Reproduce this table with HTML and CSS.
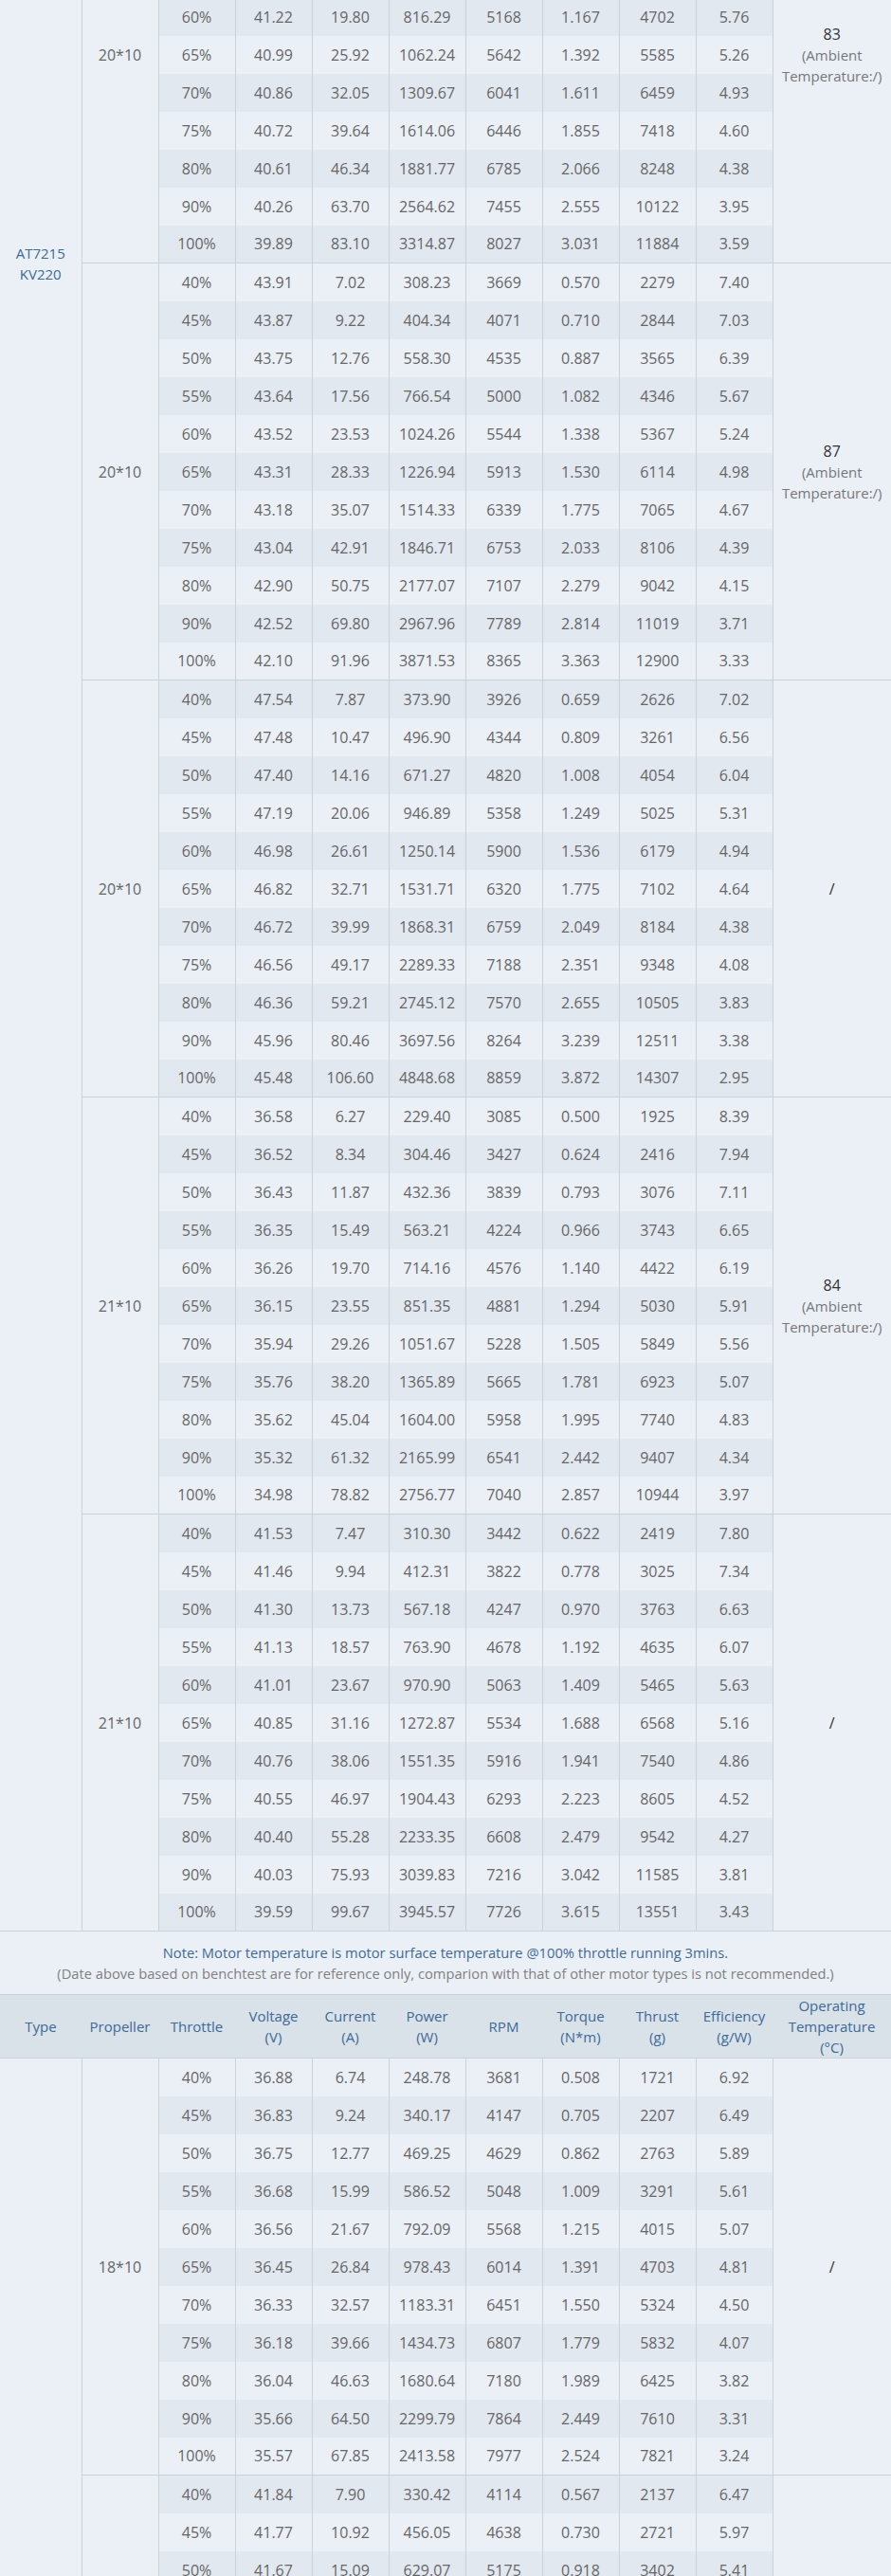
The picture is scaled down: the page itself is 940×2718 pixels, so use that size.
FILE: index.html
```html
<!DOCTYPE html>
<html lang="en">
<head>
<meta charset="utf-8">
<title>AT7215 KV220 test data</title>
<link rel="stylesheet" href="styles.css">
</head>
<body>
<div class="page">
<table class="spec">
<colgroup>
<col class="c-type"><col class="c-num"><col class="c-num"><col class="c-num"><col class="c-num"><col class="c-num"><col class="c-num"><col class="c-num"><col class="c-num"><col class="c-num"><col class="c-temp">
</colgroup>
<tbody class="t1">
<tr class="g"><td class="span type" rowspan="55"><span class="model">AT7215<br>KV220</span></td><td class="span prop" rowspan="11">20*10</td><td></td><td></td><td></td><td></td><td></td><td></td><td></td><td></td><td class="span temp" rowspan="11"><span class="tv">83</span><br><span class="amb">(Ambient<br>Temperature:/)</span></td></tr>
<tr><td></td><td></td><td></td><td></td><td></td><td></td><td></td><td></td></tr>
<tr><td></td><td></td><td></td><td></td><td></td><td></td><td></td><td></td></tr>
<tr><td></td><td></td><td></td><td></td><td></td><td></td><td></td><td></td></tr>
<tr><td>60%</td><td>41.22</td><td>19.80</td><td>816.29</td><td>5168</td><td>1.167</td><td>4702</td><td>5.76</td></tr>
<tr><td>65%</td><td>40.99</td><td>25.92</td><td>1062.24</td><td>5642</td><td>1.392</td><td>5585</td><td>5.26</td></tr>
<tr><td>70%</td><td>40.86</td><td>32.05</td><td>1309.67</td><td>6041</td><td>1.611</td><td>6459</td><td>4.93</td></tr>
<tr><td>75%</td><td>40.72</td><td>39.64</td><td>1614.06</td><td>6446</td><td>1.855</td><td>7418</td><td>4.60</td></tr>
<tr><td>80%</td><td>40.61</td><td>46.34</td><td>1881.77</td><td>6785</td><td>2.066</td><td>8248</td><td>4.38</td></tr>
<tr><td>90%</td><td>40.26</td><td>63.70</td><td>2564.62</td><td>7455</td><td>2.555</td><td>10122</td><td>3.95</td></tr>
<tr><td>100%</td><td>39.89</td><td>83.10</td><td>3314.87</td><td>8027</td><td>3.031</td><td>11884</td><td>3.59</td></tr>

<tr class="g"><td class="span prop" rowspan="11">20*10</td><td>40%</td><td>43.91</td><td>7.02</td><td>308.23</td><td>3669</td><td>0.570</td><td>2279</td><td>7.40</td><td class="span temp" rowspan="11"><span class="tv">87</span><br><span class="amb">(Ambient<br>Temperature:/)</span></td></tr>
<tr><td>45%</td><td>43.87</td><td>9.22</td><td>404.34</td><td>4071</td><td>0.710</td><td>2844</td><td>7.03</td></tr>
<tr><td>50%</td><td>43.75</td><td>12.76</td><td>558.30</td><td>4535</td><td>0.887</td><td>3565</td><td>6.39</td></tr>
<tr><td>55%</td><td>43.64</td><td>17.56</td><td>766.54</td><td>5000</td><td>1.082</td><td>4346</td><td>5.67</td></tr>
<tr><td>60%</td><td>43.52</td><td>23.53</td><td>1024.26</td><td>5544</td><td>1.338</td><td>5367</td><td>5.24</td></tr>
<tr><td>65%</td><td>43.31</td><td>28.33</td><td>1226.94</td><td>5913</td><td>1.530</td><td>6114</td><td>4.98</td></tr>
<tr><td>70%</td><td>43.18</td><td>35.07</td><td>1514.33</td><td>6339</td><td>1.775</td><td>7065</td><td>4.67</td></tr>
<tr><td>75%</td><td>43.04</td><td>42.91</td><td>1846.71</td><td>6753</td><td>2.033</td><td>8106</td><td>4.39</td></tr>
<tr><td>80%</td><td>42.90</td><td>50.75</td><td>2177.07</td><td>7107</td><td>2.279</td><td>9042</td><td>4.15</td></tr>
<tr><td>90%</td><td>42.52</td><td>69.80</td><td>2967.96</td><td>7789</td><td>2.814</td><td>11019</td><td>3.71</td></tr>
<tr><td>100%</td><td>42.10</td><td>91.96</td><td>3871.53</td><td>8365</td><td>3.363</td><td>12900</td><td>3.33</td></tr>

<tr class="g"><td class="span prop" rowspan="11">20*10</td><td>40%</td><td>47.54</td><td>7.87</td><td>373.90</td><td>3926</td><td>0.659</td><td>2626</td><td>7.02</td><td class="span temp" rowspan="11"><span class="tv">/</span></td></tr>
<tr><td>45%</td><td>47.48</td><td>10.47</td><td>496.90</td><td>4344</td><td>0.809</td><td>3261</td><td>6.56</td></tr>
<tr><td>50%</td><td>47.40</td><td>14.16</td><td>671.27</td><td>4820</td><td>1.008</td><td>4054</td><td>6.04</td></tr>
<tr><td>55%</td><td>47.19</td><td>20.06</td><td>946.89</td><td>5358</td><td>1.249</td><td>5025</td><td>5.31</td></tr>
<tr><td>60%</td><td>46.98</td><td>26.61</td><td>1250.14</td><td>5900</td><td>1.536</td><td>6179</td><td>4.94</td></tr>
<tr><td>65%</td><td>46.82</td><td>32.71</td><td>1531.71</td><td>6320</td><td>1.775</td><td>7102</td><td>4.64</td></tr>
<tr><td>70%</td><td>46.72</td><td>39.99</td><td>1868.31</td><td>6759</td><td>2.049</td><td>8184</td><td>4.38</td></tr>
<tr><td>75%</td><td>46.56</td><td>49.17</td><td>2289.33</td><td>7188</td><td>2.351</td><td>9348</td><td>4.08</td></tr>
<tr><td>80%</td><td>46.36</td><td>59.21</td><td>2745.12</td><td>7570</td><td>2.655</td><td>10505</td><td>3.83</td></tr>
<tr><td>90%</td><td>45.96</td><td>80.46</td><td>3697.56</td><td>8264</td><td>3.239</td><td>12511</td><td>3.38</td></tr>
<tr><td>100%</td><td>45.48</td><td>106.60</td><td>4848.68</td><td>8859</td><td>3.872</td><td>14307</td><td>2.95</td></tr>

<tr class="g"><td class="span prop" rowspan="11">21*10</td><td>40%</td><td>36.58</td><td>6.27</td><td>229.40</td><td>3085</td><td>0.500</td><td>1925</td><td>8.39</td><td class="span temp" rowspan="11"><span class="tv">84</span><br><span class="amb">(Ambient<br>Temperature:/)</span></td></tr>
<tr><td>45%</td><td>36.52</td><td>8.34</td><td>304.46</td><td>3427</td><td>0.624</td><td>2416</td><td>7.94</td></tr>
<tr><td>50%</td><td>36.43</td><td>11.87</td><td>432.36</td><td>3839</td><td>0.793</td><td>3076</td><td>7.11</td></tr>
<tr><td>55%</td><td>36.35</td><td>15.49</td><td>563.21</td><td>4224</td><td>0.966</td><td>3743</td><td>6.65</td></tr>
<tr><td>60%</td><td>36.26</td><td>19.70</td><td>714.16</td><td>4576</td><td>1.140</td><td>4422</td><td>6.19</td></tr>
<tr><td>65%</td><td>36.15</td><td>23.55</td><td>851.35</td><td>4881</td><td>1.294</td><td>5030</td><td>5.91</td></tr>
<tr><td>70%</td><td>35.94</td><td>29.26</td><td>1051.67</td><td>5228</td><td>1.505</td><td>5849</td><td>5.56</td></tr>
<tr><td>75%</td><td>35.76</td><td>38.20</td><td>1365.89</td><td>5665</td><td>1.781</td><td>6923</td><td>5.07</td></tr>
<tr><td>80%</td><td>35.62</td><td>45.04</td><td>1604.00</td><td>5958</td><td>1.995</td><td>7740</td><td>4.83</td></tr>
<tr><td>90%</td><td>35.32</td><td>61.32</td><td>2165.99</td><td>6541</td><td>2.442</td><td>9407</td><td>4.34</td></tr>
<tr><td>100%</td><td>34.98</td><td>78.82</td><td>2756.77</td><td>7040</td><td>2.857</td><td>10944</td><td>3.97</td></tr>

<tr class="g"><td class="span prop" rowspan="11">21*10</td><td>40%</td><td>41.53</td><td>7.47</td><td>310.30</td><td>3442</td><td>0.622</td><td>2419</td><td>7.80</td><td class="span temp" rowspan="11"><span class="tv">/</span></td></tr>
<tr><td>45%</td><td>41.46</td><td>9.94</td><td>412.31</td><td>3822</td><td>0.778</td><td>3025</td><td>7.34</td></tr>
<tr><td>50%</td><td>41.30</td><td>13.73</td><td>567.18</td><td>4247</td><td>0.970</td><td>3763</td><td>6.63</td></tr>
<tr><td>55%</td><td>41.13</td><td>18.57</td><td>763.90</td><td>4678</td><td>1.192</td><td>4635</td><td>6.07</td></tr>
<tr><td>60%</td><td>41.01</td><td>23.67</td><td>970.90</td><td>5063</td><td>1.409</td><td>5465</td><td>5.63</td></tr>
<tr><td>65%</td><td>40.85</td><td>31.16</td><td>1272.87</td><td>5534</td><td>1.688</td><td>6568</td><td>5.16</td></tr>
<tr><td>70%</td><td>40.76</td><td>38.06</td><td>1551.35</td><td>5916</td><td>1.941</td><td>7540</td><td>4.86</td></tr>
<tr><td>75%</td><td>40.55</td><td>46.97</td><td>1904.43</td><td>6293</td><td>2.223</td><td>8605</td><td>4.52</td></tr>
<tr><td>80%</td><td>40.40</td><td>55.28</td><td>2233.35</td><td>6608</td><td>2.479</td><td>9542</td><td>4.27</td></tr>
<tr><td>90%</td><td>40.03</td><td>75.93</td><td>3039.83</td><td>7216</td><td>3.042</td><td>11585</td><td>3.81</td></tr>
<tr><td>100%</td><td>39.59</td><td>99.67</td><td>3945.57</td><td>7726</td><td>3.615</td><td>13551</td><td>3.43</td></tr>
</tbody>

<tbody class="note">
<tr><td colspan="11"><span class="note-main">Note: Motor temperature is motor surface temperature @100% throttle running 3mins.</span><br><span class="note-sub">(Date above based on benchtest are for reference only, comparion with that of other motor types is not recommended.)</span></td></tr>
</tbody>

<tbody class="head">
<tr><th>Type</th><th>Propeller</th><th>Throttle</th><th>Voltage<br>(V)</th><th>Current<br>(A)</th><th>Power<br>(W)</th><th>RPM</th><th>Torque<br>(N*m)</th><th>Thrust<br>(g)</th><th>Efficiency<br>(g/W)</th><th>Operating<br>Temperature<br>(°C)</th></tr>
</tbody>

<tbody class="t2">
<tr class="g"><td class="span type" rowspan="14"></td><td class="span prop" rowspan="11">18*10</td><td>40%</td><td>36.88</td><td>6.74</td><td>248.78</td><td>3681</td><td>0.508</td><td>1721</td><td>6.92</td><td class="span temp" rowspan="11"><span class="tv">/</span></td></tr>
<tr><td>45%</td><td>36.83</td><td>9.24</td><td>340.17</td><td>4147</td><td>0.705</td><td>2207</td><td>6.49</td></tr>
<tr><td>50%</td><td>36.75</td><td>12.77</td><td>469.25</td><td>4629</td><td>0.862</td><td>2763</td><td>5.89</td></tr>
<tr><td>55%</td><td>36.68</td><td>15.99</td><td>586.52</td><td>5048</td><td>1.009</td><td>3291</td><td>5.61</td></tr>
<tr><td>60%</td><td>36.56</td><td>21.67</td><td>792.09</td><td>5568</td><td>1.215</td><td>4015</td><td>5.07</td></tr>
<tr><td>65%</td><td>36.45</td><td>26.84</td><td>978.43</td><td>6014</td><td>1.391</td><td>4703</td><td>4.81</td></tr>
<tr><td>70%</td><td>36.33</td><td>32.57</td><td>1183.31</td><td>6451</td><td>1.550</td><td>5324</td><td>4.50</td></tr>
<tr><td>75%</td><td>36.18</td><td>39.66</td><td>1434.73</td><td>6807</td><td>1.779</td><td>5832</td><td>4.07</td></tr>
<tr><td>80%</td><td>36.04</td><td>46.63</td><td>1680.64</td><td>7180</td><td>1.989</td><td>6425</td><td>3.82</td></tr>
<tr><td>90%</td><td>35.66</td><td>64.50</td><td>2299.79</td><td>7864</td><td>2.449</td><td>7610</td><td>3.31</td></tr>
<tr><td>100%</td><td>35.57</td><td>67.85</td><td>2413.58</td><td>7977</td><td>2.524</td><td>7821</td><td>3.24</td></tr>
<tr class="g"><td class="span prop" rowspan="3"></td><td>40%</td><td>41.84</td><td>7.90</td><td>330.42</td><td>4114</td><td>0.567</td><td>2137</td><td>6.47</td><td class="span temp" rowspan="3"></td></tr>
<tr><td>45%</td><td>41.77</td><td>10.92</td><td>456.05</td><td>4638</td><td>0.730</td><td>2721</td><td>5.97</td></tr>
<tr><td>50%</td><td>41.67</td><td>15.09</td><td>629.07</td><td>5175</td><td>0.918</td><td>3402</td><td>5.41</td></tr>
</tbody>
</table>
</div>
</body>
</html>
```

FILE: styles.css
```css
:root {
  --base: #ebf0f7;
  --stripe: #e2e8f0;
  --head: #d9e1e9;
  --line: #c9d1db;
  --text: #666666;
  --blue: #3e6a96;
}

html, body {
  margin: 0;
  padding: 0;
  background: var(--base);
}

body {
  font-family: "Open Sans", "Noto Sans", "Liberation Sans", sans-serif;
  color: var(--text);
}

.page {
  width: 940px;
  height: 2718px;
  overflow: hidden;
}

.spec {
  width: 940px;
  margin-top: -163px;
  border-collapse: collapse;
  table-layout: fixed;
  background: var(--base);
}

.c-type { width: 86px; }
.c-num { width: 81px; }
.c-temp { width: 125px; }

.spec tr { height: 40px; }

.spec td {
  padding: 0;
  text-align: center;
  vertical-align: middle;
  font-size: 16px;
  line-height: 22px;
  color: var(--text);
  border-left: 1px solid var(--line);
}

.spec td.type { border-left: 0; }

.t1 tr:nth-child(odd) td:not(.span),
.t2 tr:nth-child(even) td:not(.span) {
  background: var(--stripe);
}

.spec tr.g td { border-top: 1px solid var(--line); }

.t1 td.type {
  vertical-align: top;
  padding-top: 418px;
}

.model {
  color: var(--blue);
  font-size: 15px;
  line-height: 22px;
}

.temp .tv {
  color: #333333;
  font-size: 16px;
}

.temp .amb {
  color: #777777;
  font-size: 15px;
}

.note td {
  border-left: 0;
  border-top: 1px solid var(--line);
  border-bottom: 1px solid var(--line);
  height: 66px;
  font-size: 14.7px;
  line-height: 22px;
}

.note-main { color: var(--blue); }
.note-sub { color: #808080; }

.head tr { height: 66px; }

.head th {
  padding: 0;
  background: var(--head);
  color: var(--blue);
  font-weight: normal;
  font-size: 15px;
  line-height: 22px;
  text-align: center;
  vertical-align: middle;
}
```
